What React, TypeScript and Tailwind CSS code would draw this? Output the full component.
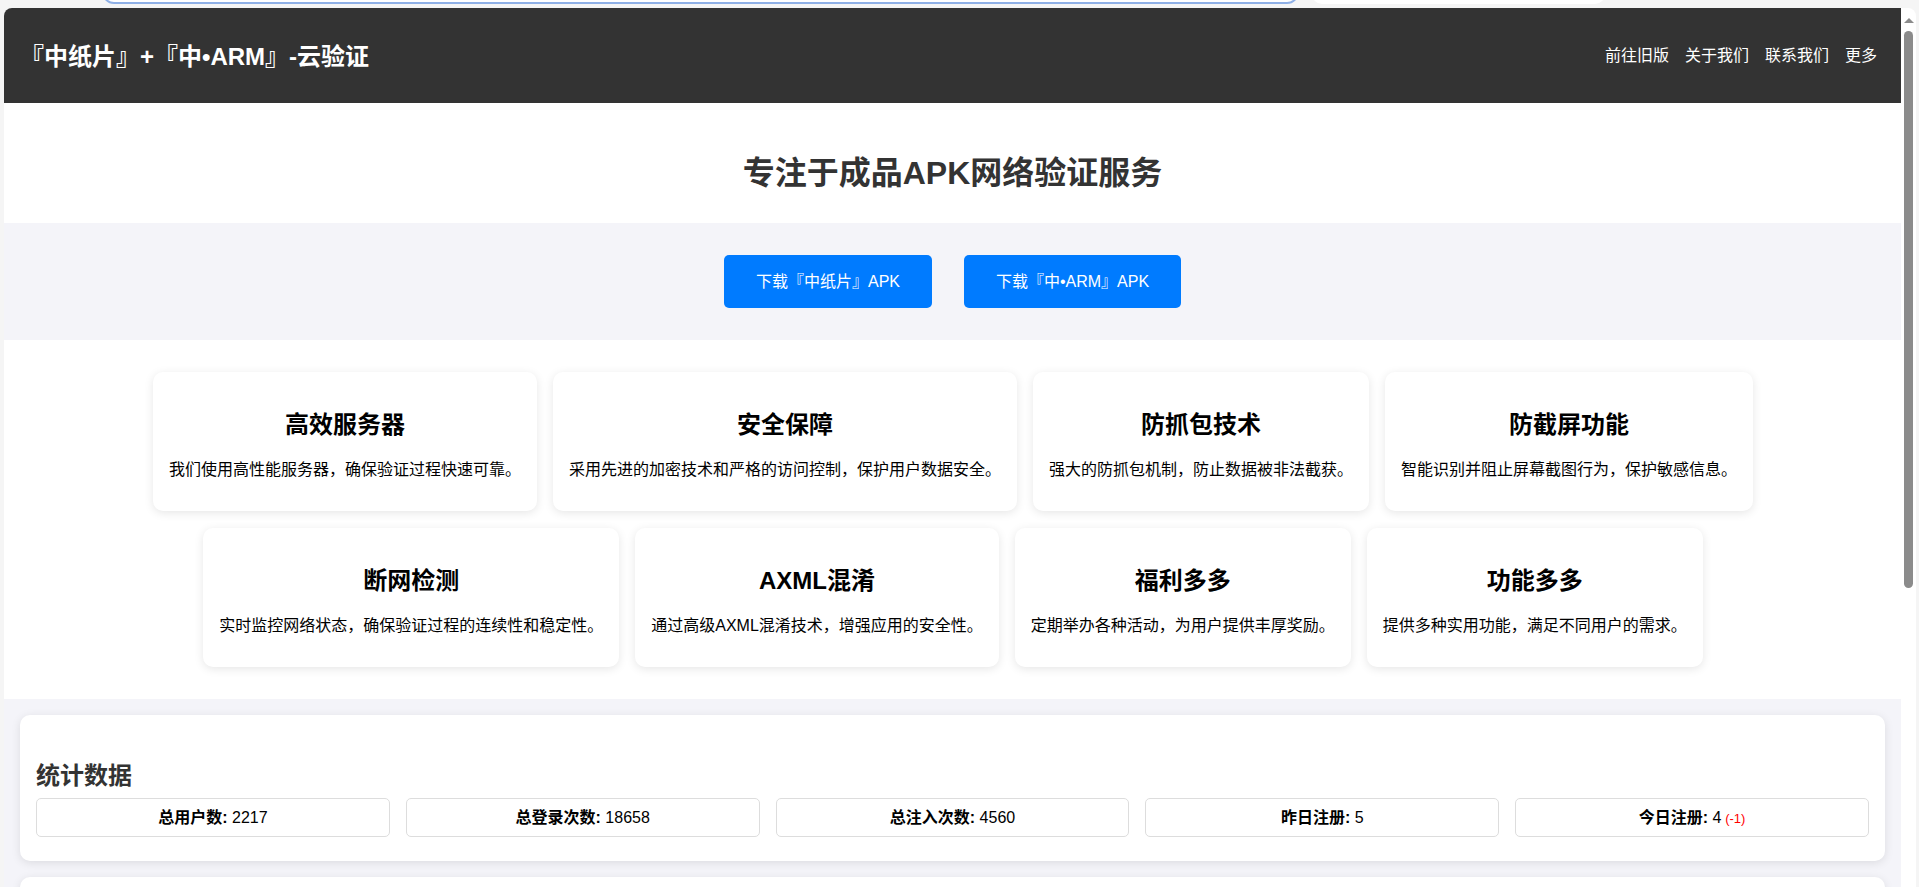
const sans = "font-['Liberation_Sans','Noto_Sans_CJK_SC',sans-serif]"

const topCards = [
  { title: "高效服务器", text: "我们使用高性能服务器，确保验证过程快速可靠。" },
  { title: "安全保障", text: "采用先进的加密技术和严格的访问控制，保护用户数据安全。" },
  { title: "防抓包技术", text: "强大的防抓包机制，防止数据被非法截获。" },
  { title: "防截屏功能", text: "智能识别并阻止屏幕截图行为，保护敏感信息。" },
  { title: "断网检测", text: "实时监控网络状态，确保验证过程的连续性和稳定性。" },
  { title: "AXML混淆", text: "通过高级AXML混淆技术，增强应用的安全性。" },
  { title: "福利多多", text: "定期举办各种活动，为用户提供丰厚奖励。" },
  { title: "功能多多", text: "提供多种实用功能，满足不同用户的需求。" },
]

const stats = [
  { label: "总用户数:", value: "2217" },
  { label: "总登录次数:", value: "18658" },
  { label: "总注入次数:", value: "4560" },
  { label: "昨日注册:", value: "5" },
  { label: "今日注册:", value: "4", diff: "(-1)" },
]

const navLinks = ["前往旧版", "关于我们", "联系我们", "更多"]

function Scrollbar() {
  return (
    <div className="flex w-[15px] shrink-0 flex-col items-center rounded-tr-lg bg-white">
      <div className="mt-[10px] h-0 w-0 border-x-[5px] border-b-[5px] border-x-transparent border-b-[#8b8b8b]" />
      <div className="mt-[8px] h-[557px] w-[9px] rounded-[5px] bg-[#8b8b8b]" />
    </div>
  )
}

export default function App() {
  return (
    <div className={`${sans} h-[887px] w-full overflow-hidden bg-[#f5f5f5]`}>
      <div className="relative h-[8px]">
        <div className="absolute left-[102px] top-[-20px] h-[24px] w-[1197px] rounded-b-[12px] border-2 border-[#8fb0e6] bg-white" />
        <div className="absolute left-[1312px] top-[-20px] h-[24px] w-[293px] rounded-b-[10px] bg-white" />
      </div>
      <div className="flex h-[879px] pl-[4px] pr-[3px]">
        <div className="min-w-0 flex-1 overflow-hidden rounded-tl-lg bg-white">
          <header className="flex h-[95px] items-center justify-between bg-[#333333] pl-[16px] pr-[24px] text-white">
            <h1 className="pt-[3px] text-[24px] font-bold">『中纸片』+『中•ARM』-云验证</h1>
            <nav className="flex gap-4 pt-[1px] text-[16px]">
              {navLinks.map((link) => (
                <a key={link}>{link}</a>
              ))}
            </nav>
          </header>

          <section className="flex h-[120px] items-center justify-center pt-[20px]">
            <h2 className="text-[32px] font-bold text-[#333333]">专注于成品APK网络验证服务</h2>
          </section>

          <section className="flex h-[117px] items-center justify-center gap-8 bg-[#f4f4f9]">
            <a className="flex h-[53px] w-[208px] items-center justify-center rounded-[5px] bg-[#007bff] text-[16px] text-white">
              下载『中纸片』APK
            </a>
            <a className="flex h-[53px] w-[217px] items-center justify-center rounded-[5px] bg-[#007bff] text-[16px] text-white">
              下载『中•ARM』APK
            </a>
          </section>

          <section className="flex h-[359px] flex-wrap content-start justify-center gap-x-4 gap-y-[17px] pl-[25px] pr-6 pt-[32px]">
            {topCards.map((card) => (
              <div key={card.title} className="h-[139px] rounded-[10px] bg-white p-4 text-center text-black shadow-[0_2px_10px_rgba(0,0,0,0.1)]">
                <h3 className="mt-[23px] text-[24px] font-bold leading-[28px]">{card.title}</h3>
                <p className="mt-[21px] text-[16px] leading-[20px]">{card.text}</p>
              </div>
            ))}
          </section>

          <section className="bg-[#f4f4f9] px-4 pt-4">
            <div className="rounded-[10px] bg-white px-4 pb-6 shadow-[0_2px_10px_rgba(0,0,0,0.1)]">
              <h2 className="pb-[8px] pt-[46px] text-[24px] font-bold leading-[29px] text-[#333333]">统计数据</h2>
              <div className="grid grid-cols-5 gap-4">
                {stats.map((stat) => (
                  <div key={stat.label} className="h-[39px] rounded-[5px] border border-[#dddddd] text-center text-[16px] leading-[37px] text-black">
                    <strong className="font-bold">{stat.label}</strong> {stat.value}
                    {stat.diff && <span className="text-[13px] text-[#ff0000]"> {stat.diff}</span>}
                  </div>
                ))}
              </div>
            </div>
            <div className="mt-4 h-[40px] rounded-[10px] bg-white shadow-[0_2px_10px_rgba(0,0,0,0.1)]" />
          </section>
        </div>
        <Scrollbar />
      </div>
    </div>
  )
}
